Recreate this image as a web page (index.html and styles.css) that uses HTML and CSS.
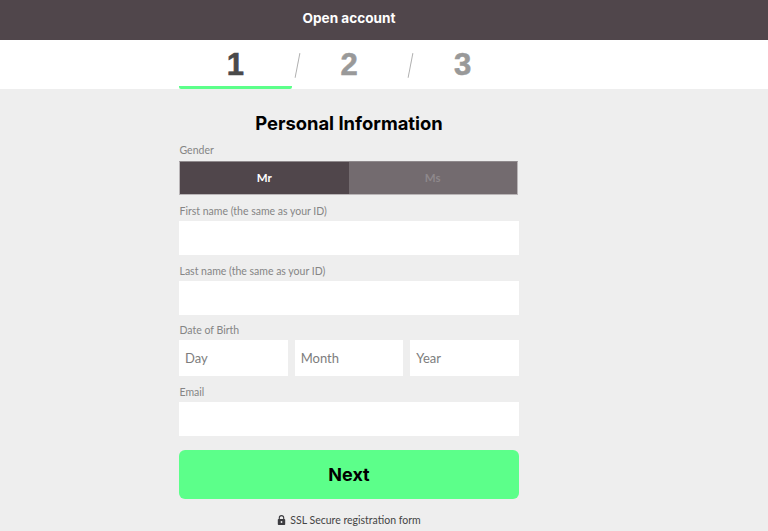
FILE: index.html
```html
<!DOCTYPE html>
<html lang="en">
<head>
<meta charset="utf-8">
<title>Open account</title>
<link rel="stylesheet" href="styles.css">
</head>
<body>
<header class="topbar"><div class="topbar-title">Open account</div></header>
<nav class="steps">
  <div class="steps-inner">
    <div class="step step-active">1</div>
    <div class="slash"></div>
    <div class="step">2</div>
    <div class="slash"></div>
    <div class="step">3</div>
  </div>
</nav>
<main class="form">
  <h1 class="title">Personal Information</h1>
  <div class="label label-gender">Gender</div>
  <div class="gender">
    <div class="gender-opt gender-on">Mr</div>
    <div class="gender-opt gender-off">Ms</div>
  </div>
  <label class="label label-field">First name (the same as your ID)</label>
  <input class="input" type="text">
  <label class="label label-field">Last name (the same as your ID)</label>
  <input class="input" type="text">
  <label class="label label-dob">Date of Birth</label>
  <div class="dob">
    <input class="input input-dob" type="text" placeholder="Day">
    <input class="input input-dob" type="text" placeholder="Month">
    <input class="input input-dob" type="text" placeholder="Year">
  </div>
  <label class="label label-field">Email</label>
  <input class="input" type="text">
  <button class="next" type="button">Next</button>
  <div class="secure">
    <svg class="lock" width="9" height="10" viewBox="0 0 9 10"><path d="M2.3 4V2.8a2.2 2.2 0 0 1 4.4 0V4" fill="none" stroke="#3c3c40" stroke-width="1.1"/><rect x="0.8" y="4" width="7.4" height="6" rx="0.8" fill="#3c3c40"/><circle cx="4.5" cy="7" r="0.9" fill="#eee"/></svg>
    <span>SSL Secure registration form</span>
  </div>
</main>
</body>
</html>
```
FILE: styles.css
```css
* { box-sizing: border-box; }
html, body { margin: 0; height: 100%; }
body {
  background: #eeeeee;
  font-family: "Lato", "Liberation Sans", sans-serif;
  overflow: hidden;
}
.topbar {
  height: 40px;
  background: #50464b;
  color: #fff;
}
.topbar-title {
  width: 340px;
  margin-left: 179px;
  font-family: "Inter", sans-serif;
  font-weight: 700;
  font-size: 13.6px;
  line-height: 37px;
  text-align: center;
}
.steps { height: 49px; background: #fff; }
.steps-inner {
  width: 340px;
  margin-left: 179px;
  display: flex;
  height: 49px;
}
.step {
  width: 113px;
  height: 49px;
  font-family: "Liberation Sans", sans-serif;
  font-weight: 700;
  font-size: 31px;
  line-height: 50px;
  text-align: center;
  color: #999;
  -webkit-text-stroke: 0.6px currentColor;
}
.step-active { color: #4a4a4a; border-bottom: 3px solid #5cff8a; border-radius: 0 0 2px 2px; }
.slash {
  width: 1px;
  flex: none;
  position: relative;
}
.slash::before {
  content: "";
  position: absolute;
  left: 5px;
  top: 13px;
  height: 25px;
  width: 1.2px;
  background: #b0b0b0;
  transform: rotate(11deg);
}
.form { width: 340px; margin-left: 179px; }
.title {
  margin: 0;
  padding-top: 22px;
  height: 54px;
  font-family: "Inter", sans-serif;
  font-weight: 700;
  font-size: 18.4px;
  line-height: 24px;
  text-align: center;
  color: #000;
  white-space: nowrap;
}
.label {
  display: block;
  font-size: 10.5px;
  line-height: 13px;
  color: #858585;
  padding-left: 0.5px;
}
.label-gender { height: 18px; padding-top: 1px; }
.label-field { margin-top: 10px; height: 16px; }
.label-dob { margin-top: 9px; height: 16px; }
.gender {
  margin-right: 1px;
  height: 34px;
  display: flex;
  border: 1px solid #b9b5b7;
  border-top-color: #8f898c;
  font-size: 11.5px;
  font-weight: 700;
}
.gender-opt { flex: 1; text-align: center; line-height: 32px; }
.gender-on { background: #50464b; color: #fff; }
.gender-off { background: #736b6f; color: #8e888b; }
.input {
  display: block;
  width: 100%;
  height: 34px;
  border: 0;
  padding: 0 6px;
  margin: 0;
  background: #fff;
  font-family: "Lato", sans-serif;
  font-size: 13px;
  border-radius: 0;
  outline: 0;
}
.input::placeholder { color: #7d7d7d; opacity: 1; }
.dob { display: flex; gap: 7px; }
.input-dob { width: 108.67px; height: 36px; flex: none; }
.next {
  display: block;
  width: 100%;
  height: 49px;
  margin-top: 14px;
  border: 0;
  border-radius: 6px;
  background: #5cff8a;
  color: #000;
  font-family: "Inter", sans-serif;
  font-weight: 700;
  font-size: 18px;
}
.secure {
  margin-top: 14px;
  display: flex;
  justify-content: center;
  align-items: center;
  gap: 4px;
  font-size: 10.5px;
  line-height: 14px;
  color: #444;
}
```
